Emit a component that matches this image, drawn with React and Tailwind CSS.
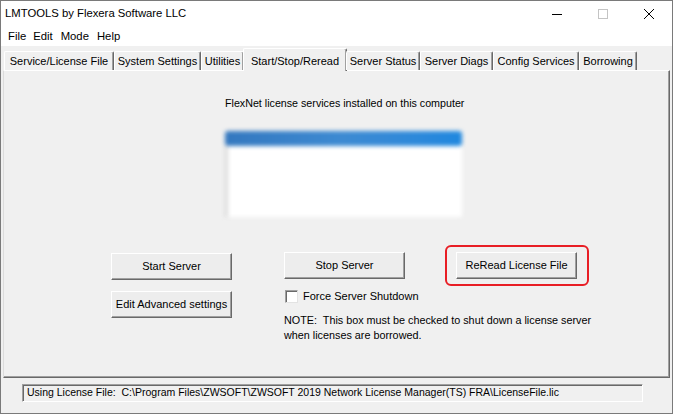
import React from 'react';

const tabs = [
  { label: 'Service/License File', w: 'w-[110px]' },
  { label: 'System Settings', w: 'w-[87px]' },
  { label: 'Utilities', w: 'w-[43px]' },
  { label: 'Start/Stop/Reread', w: 'w-[104px]', active: true },
  { label: 'Server Status', w: 'w-[74px]' },
  { label: 'Server Diags', w: 'w-[73px]' },
  { label: 'Config Services', w: 'w-[86px]' },
  { label: 'Borrowing', w: 'w-[58px]' },
];

const WinButton = ({ children }) => (
  <button className="w-[121px] h-[27px] bg-[#ededed] border border-t-white border-l-white border-r-[#696969] border-b-[#696969] shadow-[inset_-1px_-1px_0_#a0a0a0] text-[11px] text-black">
    {children}
  </button>
);

const App = () => {
  return (
    <div className="w-[673px] h-[414px] border border-[#7a7a7a] bg-[#f0f0f0] flex flex-col overflow-hidden text-[11px] text-black font-['Liberation_Sans',Arial,sans-serif]">
      {/* Title bar */}
      <div className="h-[25px] bg-white flex items-center shrink-0">
        <span className="pl-[4px] text-[11.3px] flex-1">LMTOOLS by Flexera Software LLC</span>
        <div className="w-[46px] h-full flex items-center justify-center">
          <svg width="10" height="10" viewBox="0 0 10 10"><line x1="0" y1="5.5" x2="10" y2="5.5" stroke="#000" strokeWidth="1" /></svg>
        </div>
        <div className="w-[46px] h-full flex items-center justify-center">
          <svg width="10" height="10" viewBox="0 0 10 10"><rect x="0.5" y="0.5" width="9" height="9" fill="none" stroke="#c4c4c4" strokeWidth="1" /></svg>
        </div>
        <div className="w-[46px] h-full flex items-center justify-center">
          <svg width="10" height="10" viewBox="0 0 10 10"><path d="M0 0 L10 10 M10 0 L0 10" stroke="#000" strokeWidth="1" /></svg>
        </div>
      </div>

      {/* Menu bar */}
      <div className="h-[20px] bg-white flex items-center text-[11.3px] shrink-0 pl-[4px]">
        <span className="px-[3px]">File</span>
        <span className="px-[4px]">Edit</span>
        <span className="px-[4px]">Mode</span>
        <span className="px-[4px]">Help</span>
      </div>

      {/* Tabs */}
      <div className="h-[24px] flex items-end pl-[3px] shrink-0 relative z-10">
        {tabs.map((t) =>
          t.active ? (
            <div
              key={t.label}
              className={`${t.w} h-[23px] -mx-[1px] -mb-[1px] bg-[#f0f0f0] border-t border-l border-t-white border-l-white border-r border-r-[#696969] shadow-[inset_-1px_0_0_#a0a0a0] rounded-t-[2px] flex justify-center pt-[4px]`}
            >
              {t.label}
            </div>
          ) : (
            <div
              key={t.label}
              className={`${t.w} h-[19px] border-t border-l border-t-white border-l-white border-r border-r-[#696969] shadow-[inset_-1px_0_0_#a0a0a0] rounded-t-[2px] flex items-center justify-center pt-[1px]`}
            >
              {t.label}
            </div>
          )
        )}
      </div>

      {/* Panel */}
      <div className="h-[308px] mx-[2px] shrink-0 border border-t-white border-l-[#dcdcdc] border-r-[#696969] border-b-[#696969] shadow-[inset_-1px_-1px_0_#a0a0a0] flex flex-col">
        <div className="pl-[221px] pt-[26px] leading-[13px] text-[10.7px]">FlexNet license services installed on this computer</div>

        <div className="ml-[221px] mt-[21px] w-[237px] h-[86px] blur-[2px] flex flex-col">
          <div className="h-[15px] bg-gradient-to-r from-[#3478bf] via-[#3d8ad2] to-[#1f88df] rounded-[3px]"></div>
          <div className="flex-1 bg-white border-l-[3px] border-l-[#d8d8d8]"></div>
        </div>

        <div className="flex items-start pl-[107px] mt-[35px]">
          <div className="flex flex-col gap-[11px] pt-[1px]">
            <WinButton>Start Server</WinButton>
            <WinButton>Edit Advanced settings</WinButton>
          </div>

          <div className="ml-[52px] w-[122px] shrink-0 flex flex-col">
            <WinButton>Stop Server</WinButton>
            <div className="flex items-center mt-[9px] pl-[1px]">
              <div className="w-[13px] h-[13px] shrink-0 bg-white border border-t-[#a0a0a0] border-l-[#a0a0a0] border-r-[#e3e3e3] border-b-[#e3e3e3] shadow-[inset_1px_1px_0_#696969]"></div>
              <span className="ml-[5px] whitespace-nowrap">Force Server Shutdown</span>
            </div>
            <div className="mt-[8px] leading-[15px] whitespace-pre text-[10.8px]">
              {'NOTE:  This box must be checked to shut down a license server'}
              <br />
              when licenses are borrowed.
            </div>
          </div>

          <div className="ml-[50px] relative">
            <div className="absolute -top-[7px] -left-[11px] -right-[12px] -bottom-[7px] border-2 border-[#e81e25] rounded-[6px]"></div>
            <WinButton>ReRead License File</WinButton>
          </div>
        </div>
      </div>

      {/* Status */}
      <div className="flex-1 flex items-start pl-[21px] pt-[6px]">
        <div className="w-[621px] h-[18px] border border-t-[#a0a0a0] border-l-[#a0a0a0] border-r-white border-b-white shadow-[inset_1px_1px_0_#696969] flex items-center pl-[4px] whitespace-pre text-[10.5px]">
          Using License File:  C:\Program Files\ZWSOFT\ZWSOFT 2019 Network License Manager(TS) FRA\LicenseFile.lic
        </div>
      </div>
    </div>
  );
};

export default App;
